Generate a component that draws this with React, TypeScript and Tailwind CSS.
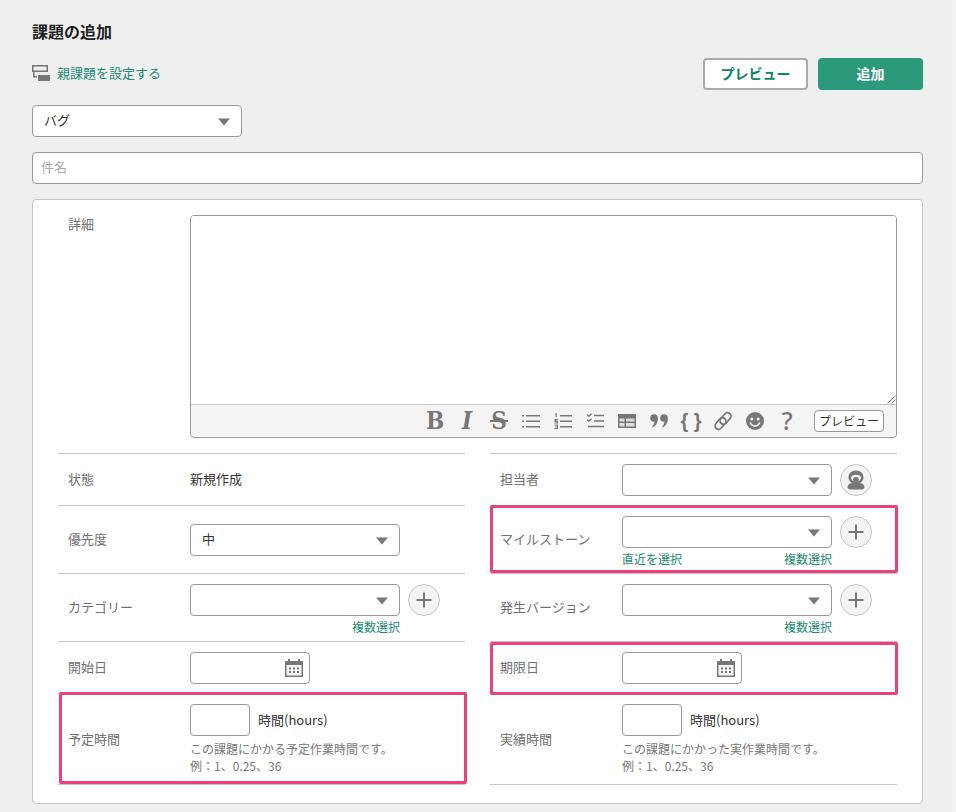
import type { ReactNode } from 'react';

const font = "font-['Noto_Sans_CJK_JP','Noto_Sans',sans-serif]";

function Caret() {
  return (
    <svg width="12" height="8" viewBox="0 0 12 8" className="absolute right-[11px] top-[12px]">
      <path d="M0 0.500h12L6 7.500z" fill="#777" />
    </svg>
  );
}

function Select({ width = 'w-[210px]', value }: { width?: string; value?: string }) {
  return (
    <div className={`relative h-8 ${width} shrink-0 rounded border border-[#999] bg-white pl-[11px] text-[13px] leading-[28px] text-[#333]`}>
      {value}
      <Caret />
    </div>
  );
}

function RoundButton({ children }: { children: ReactNode }) {
  return (
    <div className="ml-2 flex h-8 w-8 items-center justify-center rounded-full border border-[#c4c4c4] bg-[#f4f4f4]">
      {children}
    </div>
  );
}

function PlusIcon() {
  return (
    <svg width="16" height="16" viewBox="0 0 16 16">
      <path d="M8 0.500v15M0.500 8h15" stroke="#777" strokeWidth="2" />
    </svg>
  );
}

function AssigneeIcon() {
  return (
    <svg width="20" height="20" viewBox="0 0 20 20">
      <path d="M10 0.500C5.500 0.500 2.500 3.500 2.500 7.500c0 2.500 1.500 4.500 3.500 5.500C3.500 13.500 1.500 14.800 1.500 17c0 1.500 1.200 2.500 3 2.500h11c1.800 0 3-1 3-2.500 0-2.200-2-3.500-4.500-4 2-1 3.500-3 3.500-5.500 0-4-3-7-7.500-7z" fill="#777" />
      <path d="M10 4.800c-2.800 0-5 1.200-5 3 0 1.500 1.600 3 3 3.500h4c1.400-.5 3-2 3-3.500 0-1.800-2.200-3-5-3z" fill="#f4f4f4" />
      <ellipse cx="10" cy="9.500" rx="2.800" ry="2.500" fill="#777" />
    </svg>
  );
}

function CalendarIcon() {
  return (
    <svg width="18" height="18" viewBox="0 0 18 18" className="absolute right-[6px] top-[6px]">
      <path d="M0 2h3V0h2v2h8V0h2v2h3v16H0z" fill="#777" />
      <rect x="1.500" y="6" width="15" height="10.500" fill="#f4f4f4" />
      <path d="M4 8.500h2v2H4zM8 8.500h2v2H8zM12 8.500h2v2h-2zM4 12h2v2H4zM8 12h2v2H8zM12 12h2v2h-2z" fill="#777" />
    </svg>
  );
}

function DateField() {
  return (
    <div className="relative h-8 w-[120px] rounded border border-[#999] bg-white">
      <CalendarIcon />
    </div>
  );
}

function TextLink({ children }: { children: ReactNode }) {
  return <span className="text-[12px] leading-[14px] text-[#1a8b72]">{children}</span>;
}

function Row({
  label,
  top = 'pt-[10px]',
  labelTop,
  height,
  children,
}: {
  label: string;
  top?: string;
  labelTop: string;
  height: string;
  children: ReactNode;
}) {
  return (
    <div className={`flex border-t border-[#c4c4c4] ${height}`}>
      <div className={`w-[132px] shrink-0 pl-[10px] text-[13px] leading-[20px] text-[#707070] ${labelTop}`}>{label}</div>
      <div className={`min-w-0 flex-1 ${top}`}>{children}</div>
    </div>
  );
}

function SelectWithLinks({ first, icon }: { first?: string; icon: ReactNode }) {
  return (
    <div>
      <div className="flex">
        <Select />
        <RoundButton>{icon}</RoundButton>
      </div>
      <div className="flex h-[18px] w-[210px] justify-between pt-[4px]">
        <TextLink>{first}</TextLink>
        <TextLink>複数選択</TextLink>
      </div>
    </div>
  );
}

function HoursField({ help }: { help: string }) {
  return (
    <div>
      <div className="flex items-center">
        <div className="h-8 w-[60px] rounded border border-[#999] bg-white" />
        <span className="ml-[8px] text-[13px] text-[#333]">時間(hours)</span>
      </div>
      <p className="mt-[4px] text-[12px] leading-[17px] text-[#777]">{help}</p>
      <p className="text-[12px] leading-[17px] text-[#777]">例：1、0.25、36</p>
    </div>
  );
}

function Toolbar() {
  const glyph = 'relative flex h-8 w-8 items-center justify-center text-[#777]';
  return (
    <div className="flex h-8 items-center justify-end border-t border-[#c4c4c4] bg-[#f4f4f4] pr-3">
      <span className={`${glyph} font-['DejaVu_Serif_Condensed','DejaVu_Serif',serif] text-[24px] font-bold`}>B</span>
      <span className={`${glyph} font-['DejaVu_Serif_Condensed','DejaVu_Serif',serif] text-[24px] font-bold italic`}>I</span>
      <span className={`${glyph} font-['DejaVu_Serif_Condensed','DejaVu_Serif',serif] text-[24px] font-bold`}>
        S
        <span className="absolute top-[15px] left-[7px] h-[2px] w-[18px] bg-[#777]" />
      </span>
      <span className={glyph}>
        <svg width="18" height="16" viewBox="0 0 18 16" fill="#777">
          <path d="M0 2h2v1.500H0zM4 2h14v1.500H4zM0 7.500h2V9H0zM4 7.500h14V9H4zM0 13h2v1.500H0zM4 13h14v1.500H4z" />
        </svg>
      </span>
      <span className={glyph}>
        <svg width="18" height="16" viewBox="0 0 18 16" fill="#777">
          <path d="M6 2h12v1.500H6zM6 7.500h12V9H6zM6 13h12v1.500H6z" />
          <path d="M1.500 0h1.200v4.200h-1.200zM0.500 6h3.500v1H1.800v.6H4V10.500H0.500v-1h2.300V9H0.500zM0.500 11.500H4V16H0.500v-1h2.300v-.8H1v-.8h1.800v-.9H0.500z" />
        </svg>
      </span>
      <span className={glyph}>
        <svg width="18" height="16" viewBox="0 0 18 16" fill="none" stroke="#777">
          <path d="M1 1.500l1.800 1.800L5.500 .8M1 6.500l1.800 1.800 2.700-2.500" strokeWidth="1.300" />
          <path d="M8 2.500h10M8 8h10M2 13.500h16" strokeWidth="1.500" />
        </svg>
      </span>
      <span className={glyph}>
        <svg width="18" height="14" viewBox="0 0 18 14">
          <path d="M0 0h18v14H0z" fill="#777" />
          <path d="M1.500 4.500h5V7.500h-5zM8 4.500h8.500V7.500H8zM1.500 9h5v3.500h-5zM8 9h8.500v3.500H8z" fill="#dcdcdc" />
        </svg>
      </span>
      <span className={glyph}>
        <svg width="18" height="14" viewBox="0 0 18 14" fill="#777">
          <circle cx="4" cy="4" r="3.800" />
          <circle cx="14" cy="4" r="3.800" />
          <path d="M4.500 5 L7.800 4.500C7.800 8.500 6 12 2.800 13.500L2.200 12.500C4 11 4.800 8.500 4.500 5zM14.500 5L17.800 4.500C17.800 8.500 16 12 12.800 13.500L12.200 12.500C14 11 14.800 8.500 14.500 5z" />
        </svg>
      </span>
      <span className={`${glyph} font-['Liberation_Sans',sans-serif] text-[20px] font-bold`}>{'{ }'}</span>
      <span className={glyph}>
        <svg width="20" height="20" viewBox="0 0 20 20" fill="none" stroke="#777" strokeWidth="1.700">
          <rect x="1" y="9" width="13" height="7" rx="3.500" transform="rotate(-50 7.500 12.500)" />
          <rect x="6" y="4" width="13" height="7" rx="3.500" transform="rotate(-50 12.500 7.500)" />
        </svg>
      </span>
      <span className={glyph}>
        <svg width="18" height="18" viewBox="0 0 18 18">
          <circle cx="9" cy="9" r="9" fill="#777" />
          <circle cx="5.800" cy="7" r="1.500" fill="#f4f4f4" />
          <circle cx="12.200" cy="7" r="1.500" fill="#f4f4f4" />
          <path d="M4.200 10.500c1 2.400 2.800 3.500 4.800 3.500s3.800-1.100 4.800-3.500" stroke="#f4f4f4" strokeWidth="1.500" fill="none" />
        </svg>
      </span>
      <span className={`${glyph} font-['Noto_Sans',sans-serif] text-[25px] font-medium`}>?</span>
      <div className="ml-[11px] flex h-[22px] w-[70px] items-center justify-center rounded border border-[#999] bg-white text-[12px] text-[#333]">
        プレビュー
      </div>
    </div>
  );
}

export default function App() {
  return (
    <div className={`relative h-[812px] overflow-hidden bg-[#efefef] pt-[20px] pr-[33px] pl-[32px] ${font}`}>
      <h1 className="text-[16px] leading-[22px] font-bold text-[#222]">課題の追加</h1>

      <div className="mt-[16px] flex h-8 items-center justify-between">
        <div className="flex items-center pb-[2px]">
          <svg width="18" height="16" viewBox="0 0 18 16" fill="#777">
            <path d="M0 0h16v7H2.500v4H5v1.500H1V7H0zM1.500 1.500v4h13v-4z" fillRule="evenodd" />
            <rect x="6" y="10" width="12" height="6" />
          </svg>
          <span className="ml-[7px] text-[13px] text-[#1a8b72]">親課題を設定する</span>
        </div>
        <div className="flex gap-[10px]">
          <button className="h-8 w-[105px] rounded border-2 border-[#aaa] bg-white pb-[2px] text-[14px] font-bold text-[#0f8468]">
            プレビュー
          </button>
          <button className="h-8 w-[105px] rounded bg-[#2c9a7a] pb-[2px] text-[14px] font-bold text-white">追加</button>
        </div>
      </div>

      <div className="mt-[15px]">
        <Select value="バグ" />
      </div>

      <div className="mt-[15px] h-8 rounded border border-[#999] bg-white pl-2 text-[13px] leading-[28px] text-[#aaa]">
        件名
      </div>

      <div className="mt-[15px] rounded border border-[#c4c4c4] bg-white px-[25px] pt-[15px] pb-[18px]">
        <div className="flex">
          <div className="w-[132px] shrink-0 pl-[10px] text-[13px] leading-[18px] text-[#707070]">詳細</div>
          <div className="h-[223px] w-[707px] overflow-hidden rounded border border-[#999]">
            <div className="relative h-[188px] bg-white">
              <svg width="9" height="9" viewBox="0 0 9 9" className="absolute right-0 bottom-0" stroke="#777">
                <path d="M0.500 8.500L8.500 0.500M4.500 8.500L8.500 4.500" />
              </svg>
            </div>
            <Toolbar />
          </div>
        </div>

        <div className="mt-[15px] flex justify-between">
          <div className="w-[407px]">
            <Row label="状態" labelTop="pt-[15px]" height="h-[52px]" top="pt-[15px]">
              <div className="text-[13px] leading-[20px] text-[#333]">新規作成</div>
            </Row>
            <Row label="優先度" labelTop="pt-[23px]" height="h-[68px]" top="pt-[18px]">
              <Select value="中" />
            </Row>
            <Row label="カテゴリー" labelTop="pt-[23px]" height="h-[68px]">
              <SelectWithLinks icon={<PlusIcon />} />
            </Row>
            <Row label="開始日" labelTop="pt-[15px]" height="h-[52px]">
              <DateField />
            </Row>
            <Row label="予定時間" labelTop="pt-[35px]" height="h-[91px]">
              <HoursField help="この課題にかかる予定作業時間です。" />
            </Row>
            <div className="border-t border-[#c4c4c4]" />
          </div>
          <div className="w-[407px]">
            <Row label="担当者" labelTop="pt-[15px]" height="h-[52px]">
              <div className="flex">
                <Select />
                <RoundButton>
                  <AssigneeIcon />
                </RoundButton>
              </div>
            </Row>
            <Row label="マイルストーン" labelTop="pt-[23px]" height="h-[68px]">
              <SelectWithLinks first="直近を選択" icon={<PlusIcon />} />
            </Row>
            <Row label="発生バージョン" labelTop="pt-[23px]" height="h-[68px]">
              <SelectWithLinks icon={<PlusIcon />} />
            </Row>
            <Row label="期限日" labelTop="pt-[15px]" height="h-[52px]">
              <DateField />
            </Row>
            <Row label="実績時間" labelTop="pt-[35px]" height="h-[91px]">
              <HoursField help="この課題にかかった実作業時間です。" />
            </Row>
            <div className="border-t border-[#c4c4c4]" />
          </div>
        </div>
      </div>

      {/* pink annotation frames drawn over the form */}
      <div className="absolute top-[692px] left-[59px] h-[92px] w-[408px] rounded-[2px] border-[3px] border-[#ec407a]" />
      <div className="absolute top-[505px] left-[490px] h-[68px] w-[408px] rounded-[2px] border-[3px] border-[#ec407a]" />
      <div className="absolute top-[642px] left-[490px] h-[53px] w-[408px] rounded-[2px] border-[3px] border-[#ec407a]" />
      <div className="absolute top-0 right-0 h-full w-[4px] bg-[#f3f3f3]" />
    </div>
  );
}
